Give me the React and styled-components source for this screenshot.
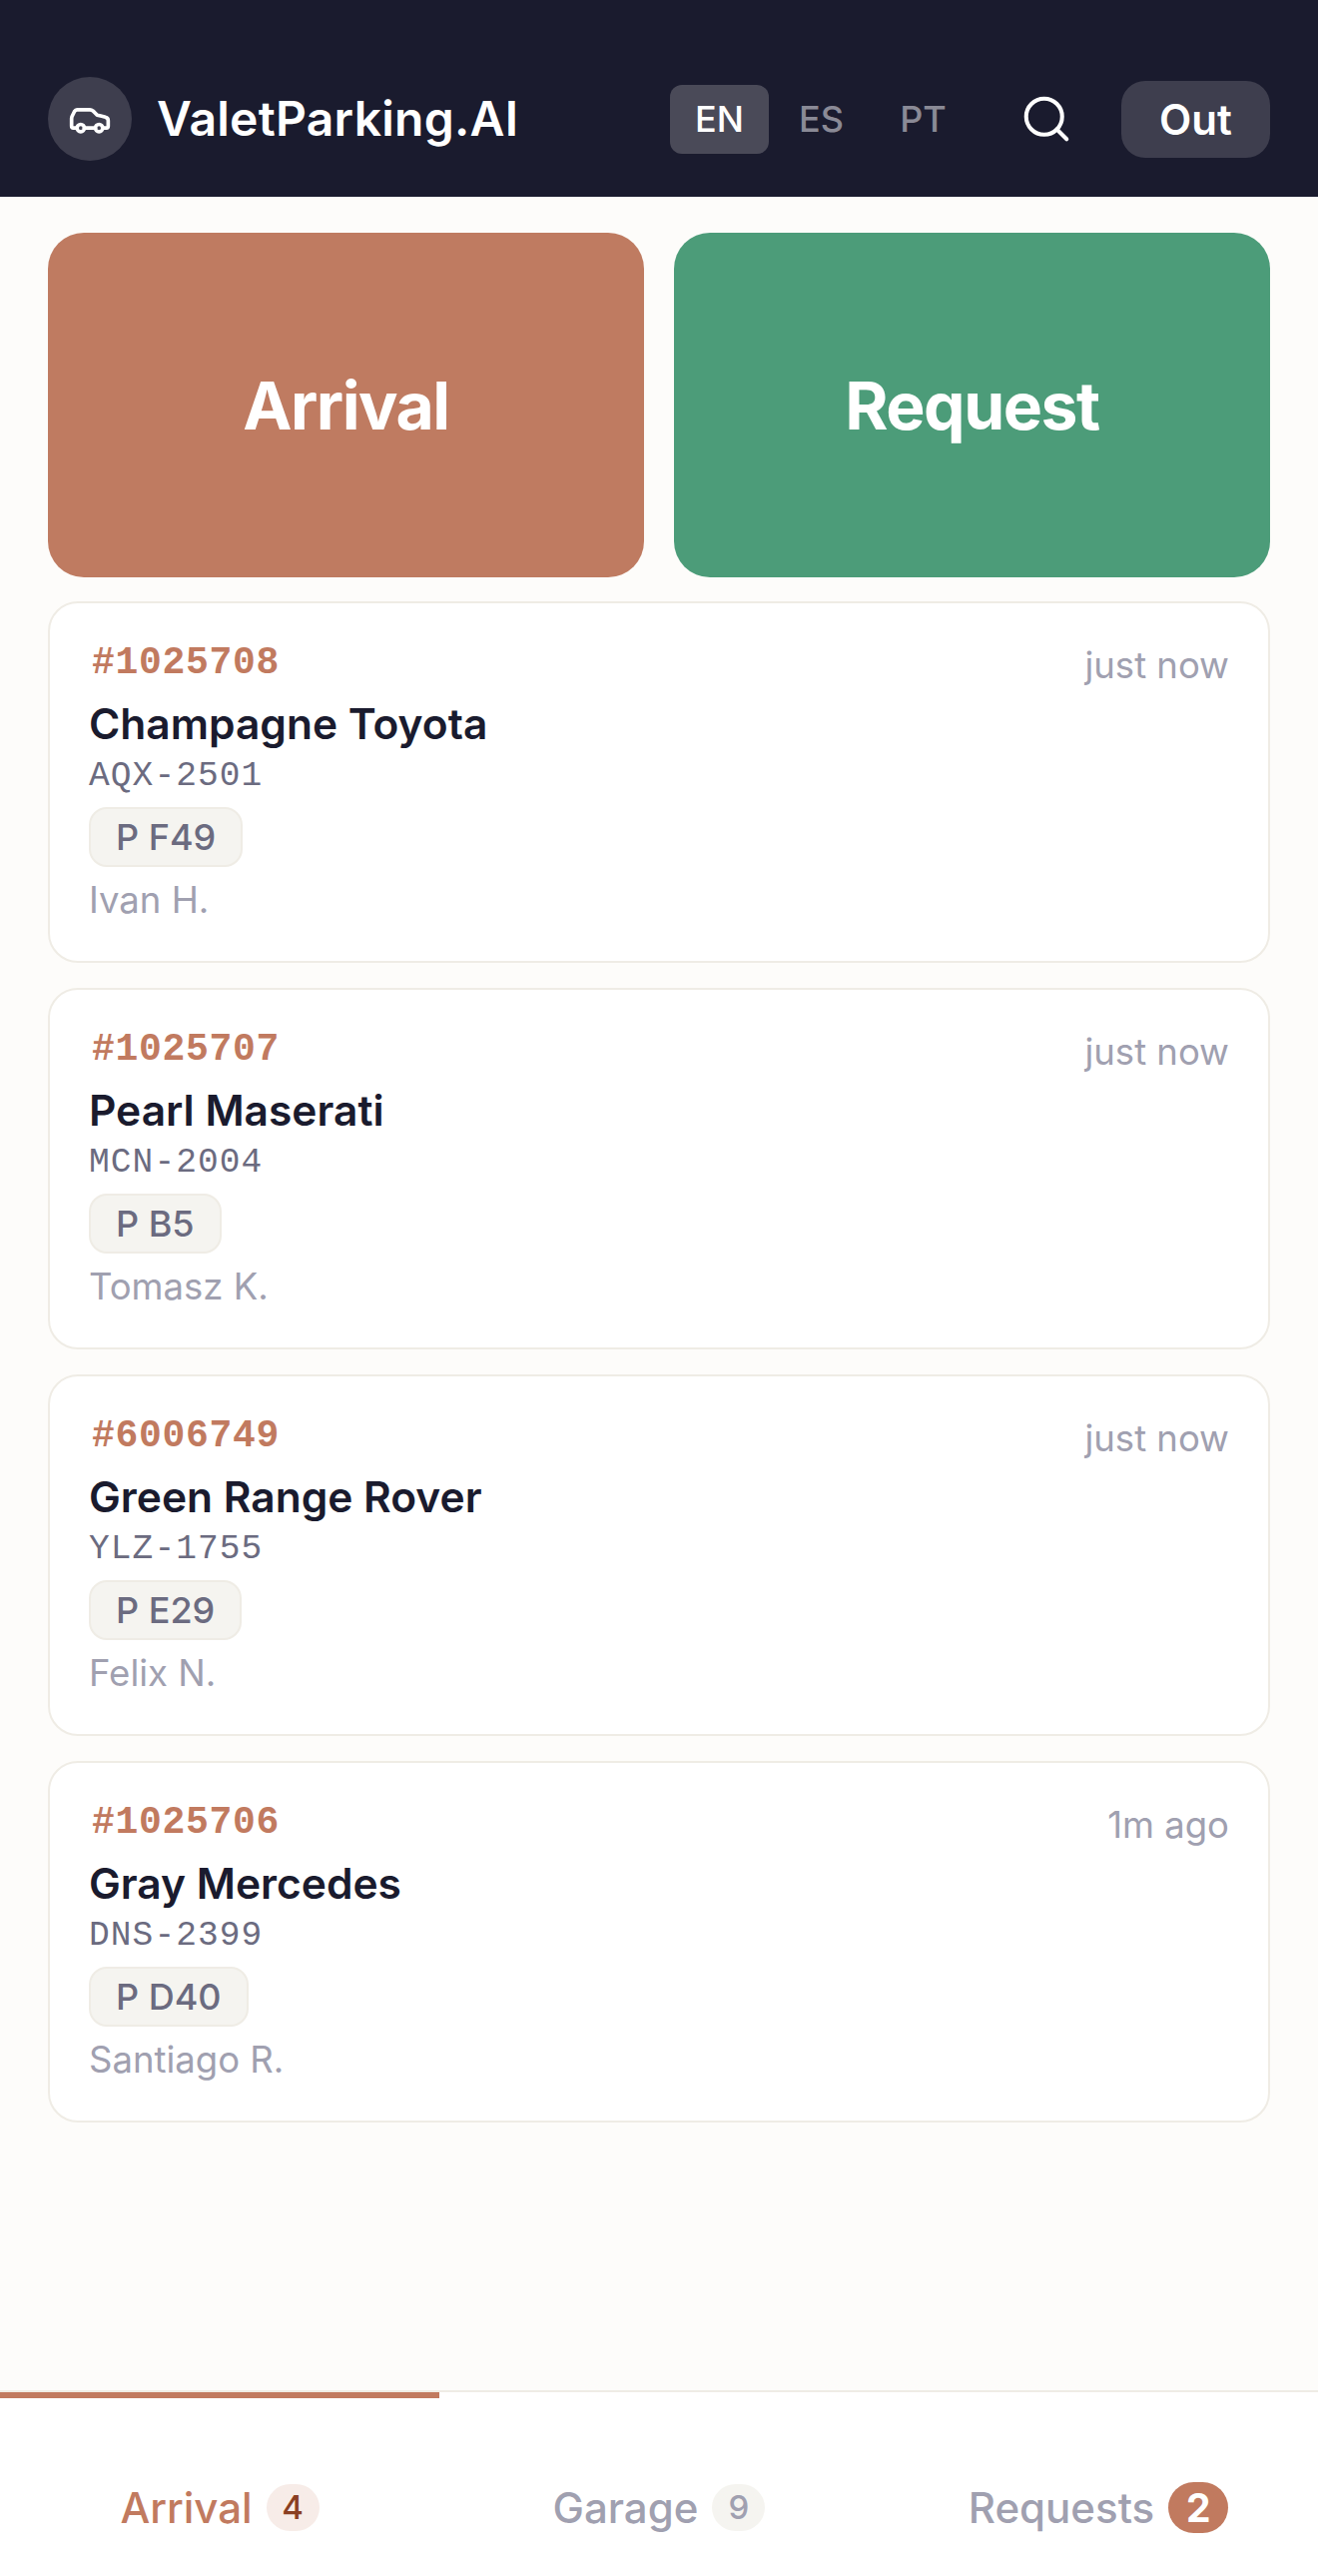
import styled, { createGlobalStyle } from "styled-components";
import { Car, Search } from "lucide-react";

const GlobalStyle = createGlobalStyle`
  * { box-sizing: border-box; }
  html, body { margin: 0; padding: 0; }
  body {
    background: #fdfcfa;
    font-family: Inter, "Liberation Sans", sans-serif;
    color: #1a1b2e;
  }
`;

const Page = styled.div`
  display: flex;
  flex-direction: column;
  min-height: 2579px;
`;

const Header = styled.header`
  display: flex;
  align-items: center;
  height: 197px;
  padding: 41px 48px 0;
  background: #1a1b2e;
`;

const Brand = styled.div`
  display: flex;
  align-items: center;
  gap: 25px;
  flex: 1;
`;

const LogoCircle = styled.div`
  display: flex;
  align-items: center;
  justify-content: center;
  width: 84px;
  height: 84px;
  border-radius: 50%;
  background: #3e3e4e;
  color: #fff;
`;

const BrandName = styled.span`
  font-size: 48px;
  line-height: 60px;
  font-weight: 600;
  letter-spacing: 0.25px;
  color: #fff;
`;

const LangGroup = styled.div`
  display: flex;
  gap: 3px;
`;

const LangButton = styled.div`
  display: flex;
  align-items: center;
  justify-content: center;
  height: 69px;
  width: 99px;
  border-radius: 12px;
  font-size: 36px;
  font-weight: 500;
  color: ${(p) => (p.$active ? "#fff" : "#8a8a96")};
  background: ${(p) => (p.$active ? "#4a4a58" : "transparent")};
`;

const SearchButton = styled.div`
  display: flex;
  margin: 0 48px 0 47px;
  color: #fff;
`;

const OutButton = styled.div`
  display: flex;
  align-items: center;
  justify-content: center;
  width: 149px;
  height: 77px;
  border-radius: 24px;
  background: #3e3e4e;
  color: #fff;
  font-size: 42px;
  font-weight: 600;
`;

const Main = styled.main`
  flex: 1;
  display: flex;
  flex-direction: column;
  padding: 36px 48px 0;
`;

const ActionRow = styled.div`
  display: grid;
  grid-template-columns: 1fr 1fr;
  gap: 30px;
  margin-bottom: 24px;
`;

const ActionButton = styled.div`
  display: flex;
  align-items: center;
  justify-content: center;
  height: 345px;
  border-radius: 36px;
  background: ${(p) => p.$bg};
  color: #fff;
  font-size: 66px;
  font-weight: 700;
  letter-spacing: -1.5px;
`;

const CardList = styled.div`
  display: flex;
  flex-direction: column;
  gap: 25px;
`;

const Card = styled.div`
  display: flex;
  justify-content: space-between;
  align-items: flex-start;
  height: 362px;
  padding: 34px 39px 0;
  background: #fff;
  border: 2px solid #efece5;
  border-radius: 30px;
`;

const CardBody = styled.div`
  display: flex;
  flex-direction: column;
  align-items: flex-start;
`;

const Ticket = styled.div`
  font-family: "Liberation Mono", monospace;
  font-size: 38px;
  line-height: 52px;
  font-weight: 700;
  letter-spacing: 0.7px;
  color: #c17a5f;
  margin-left: 3px;
`;

const CarName = styled.div`
  margin-top: 8px;
  font-size: 42.5px;
  line-height: 54px;
  font-weight: 600;
  color: #1a1b2e;
`;

const Plate = styled.div`
  margin-top: 4px;
  font-family: "Liberation Mono", monospace;
  font-size: 34.5px;
  line-height: 42px;
  letter-spacing: 1.1px;
  color: #6b6b80;
`;

const Spot = styled.div`
  display: flex;
  align-items: center;
  height: 60px;
  margin-top: 10px;
  padding: 0 25px;
  background: #f5f4f0;
  border: 2px solid #efece5;
  border-radius: 18px;
  font-size: 36px;
  font-weight: 500;
  color: #6b6b80;
`;

const Driver = styled.div`
  margin-top: 9px;
  font-size: 36.5px;
  line-height: 48px;
  color: #a0a0b0;
`;

const Time = styled.div`
  margin-top: 4px;
  font-size: 36.5px;
  line-height: 48px;
  color: #a0a0b0;
`;

const TabBar = styled.nav`
  display: grid;
  grid-template-columns: repeat(3, 1fr);
  height: 186px;
  background: #fff;
  border-top: 2px solid #efece5;
`;

const Tab = styled.div`
  display: flex;
  align-items: center;
  justify-content: center;
  gap: 14px;
  height: 184px;
  padding-top: 40px;
  border-top: 6px solid ${(p) => (p.$active ? "#c17a5f" : "transparent")};
  font-size: 42px;
  font-weight: 450;
  color: ${(p) => (p.$active ? "#c17a5f" : "#a0a0b0")};
`;

const Count = styled.span`
  display: flex;
  align-items: center;
  justify-content: center;
  min-width: ${(p) => (p.$alert ? "60px" : "53px")};
  height: ${(p) => (p.$alert ? "51px" : "47px")};
  border-radius: 26px;
  font-size: ${(p) => (p.$alert ? "39px" : "33px")};
  font-weight: ${(p) => (p.$alert ? 700 : 500)};
  color: ${(p) => (p.$alert ? "#fff" : p.$active ? "#8a3f22" : "#a0a0b0")};
  background: ${(p) => (p.$alert ? "#c17a5f" : p.$active ? "#f7ece8" : "#f5f4f0")};
`;

const cars = [
  { id: "#1025708", name: "Champagne Toyota", plate: "AQX-2501", spot: "P F49", driver: "Ivan H.", time: "just now" },
  { id: "#1025707", name: "Pearl Maserati", plate: "MCN-2004", spot: "P B5", driver: "Tomasz K.", time: "just now" },
  { id: "#6006749", name: "Green Range Rover", plate: "YLZ-1755", spot: "P E29", driver: "Felix N.", time: "just now" },
  { id: "#1025706", name: "Gray Mercedes", plate: "DNS-2399", spot: "P D40", driver: "Santiago R.", time: "1m ago" },
];

export default function App() {
  return (
    <Page>
      <GlobalStyle />
      <Header>
        <Brand>
          <LogoCircle>
            <Car size={44} strokeWidth={2} />
          </LogoCircle>
          <BrandName>ValetParking.AI</BrandName>
        </Brand>
        <LangGroup>
          <LangButton $active>EN</LangButton>
          <LangButton>ES</LangButton>
          <LangButton>PT</LangButton>
        </LangGroup>
        <SearchButton>
          <Search size={54} strokeWidth={1.8} />
        </SearchButton>
        <OutButton>Out</OutButton>
      </Header>
      <Main>
        <ActionRow>
          <ActionButton $bg="#bf7b61">Arrival</ActionButton>
          <ActionButton $bg="#4c9c79">Request</ActionButton>
        </ActionRow>
        <CardList>
          {cars.map((car) => (
            <Card key={car.id}>
              <CardBody>
                <Ticket>{car.id}</Ticket>
                <CarName>{car.name}</CarName>
                <Plate>{car.plate}</Plate>
                <Spot>{car.spot}</Spot>
                <Driver>{car.driver}</Driver>
              </CardBody>
              <Time>{car.time}</Time>
            </Card>
          ))}
        </CardList>
      </Main>
      <TabBar>
        <Tab $active>
          Arrival <Count $active>4</Count>
        </Tab>
        <Tab>
          Garage <Count>9</Count>
        </Tab>
        <Tab>
          Requests <Count $alert>2</Count>
        </Tab>
      </TabBar>
    </Page>
  );
}
